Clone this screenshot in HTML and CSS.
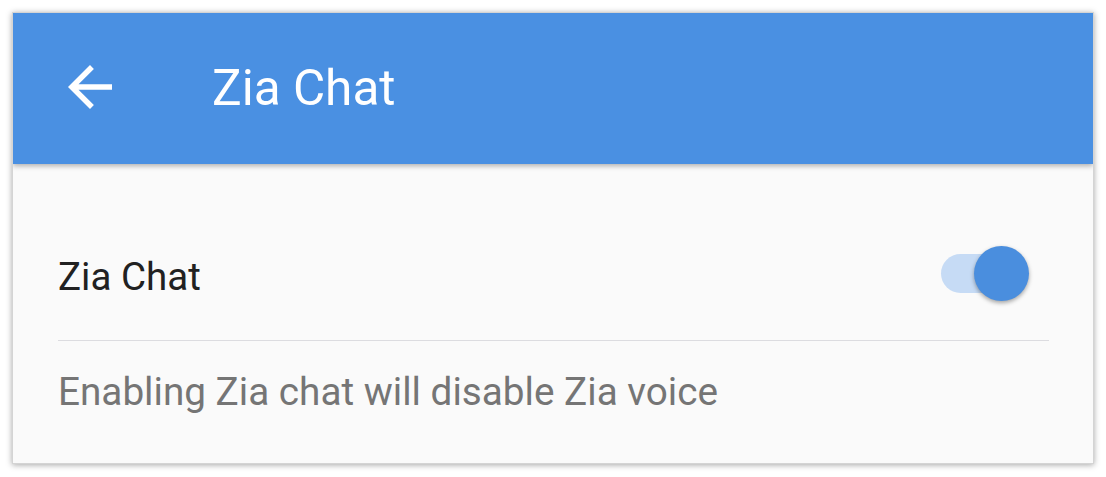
FILE: index.html
```html
<html>
	<head>
		<title>Zia Chat</title>
		<link rel="stylesheet" href="styles.css">
	</head>
	<body>
		<div class="screen">
			<div class="toolbar">
				<svg class="back" viewBox="0 0 24 24" width="66" height="66">
					<path fill="#fff" d="M20 11H7.83l5.59-5.59L12 4l-8 8 8 8 1.41-1.41L7.83 13H20v-2z"/>
				</svg>
				<span class="title">Zia Chat</span>
			</div>
			<div class="content">
				<div class="row">
					<span class="label">Zia Chat</span>
					<div class="switch">
						<div class="track"></div>
						<div class="thumb"></div>
					</div>
				</div>
				<div class="divider"></div>
				<p class="hint">Enabling Zia chat will disable Zia voice</p>
			</div>
		</div>
	</body>
</html>
```

FILE: styles.css
```css
body {
    margin: 0;
    background: #fff;
    font-family: Roboto, "Noto Sans", sans-serif;
}
.screen {
    margin: 12px;
    width: 1080px;
    height: 450px;
    border: 1px solid #d4d4d4;
    background: #fafafa;
    box-shadow: 0 1px 6px rgba(0,0,0,.35);
    display: flex;
    flex-direction: column;
    overflow: hidden;
}
.toolbar {
    height: 151px;
    flex: none;
    background: #4a90e2;
    display: flex;
    align-items: center;
    padding: 0 0 2px 44px;
    box-sizing: border-box;
    box-shadow: 0 2px 5px rgba(0,0,0,.3);
    position: relative;
}
.back {
    flex: none;
    margin-bottom: 2px;
}
.title {
    color: #fff;
    font-size: 49.5px;
    margin-left: 89px;
}
.content {
    padding: 82px 44px 0 45px;
}
.row {
    display: flex;
    align-items: center;
    height: 55px;
}
.label {
    flex: 1;
    font-size: 38.5px;
    color: #212121;
    padding-top: 5px;
}
.switch {
    width: 88px;
    height: 55px;
    margin-right: 20px;
    display: flex;
    align-items: center;
    justify-content: flex-end;
    position: relative;
}
.track {
    position: absolute;
    left: 0;
    top: 8px;
    width: 86px;
    height: 39px;
    border-radius: 20px;
    background: #c6dbf5;
}
.thumb {
    position: relative;
    width: 55px;
    height: 55px;
    border-radius: 50%;
    background: #4a8ede;
    box-shadow: 0 2px 4px rgba(0,0,0,.35);
}
.divider {
    margin-top: 39px;
    height: 1px;
    background: #dcdce0;
}
.hint {
    margin: 28px 0 0;
    font-size: 38.7px;
    color: #757575;
}
```
